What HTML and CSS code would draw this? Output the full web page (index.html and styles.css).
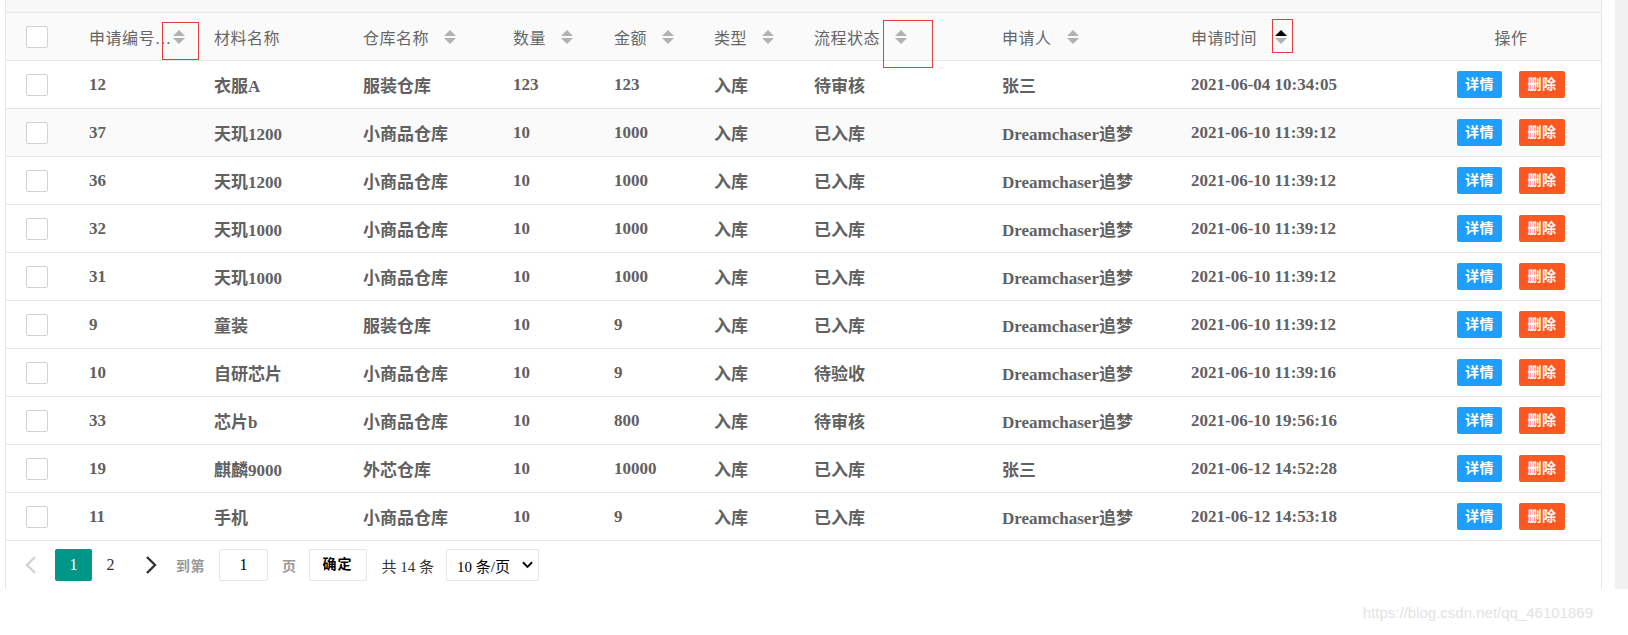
FILE: index.html
```html
<!DOCTYPE html>
<html lang="zh-CN">
<head>
<meta charset="utf-8">
<title>入库申请列表</title>
<link rel="stylesheet" href="styles.css">
</head>
<body>
<div class="page">
  <div class="table-box">
    <div class="toolbar"></div>
    <table class="grid">
      <colgroup>
        <col style="width:68px"><col style="width:125px"><col style="width:149px"><col style="width:150px">
        <col style="width:101px"><col style="width:100px"><col style="width:100px"><col style="width:188px">
        <col style="width:189px"><col style="width:245px"><col style="width:180px">
      </colgroup>
      <thead>
        <tr>
          <th class="chk-cell"><span class="chk"></span></th>
          <th><span class="hd">申请编号…<svg class="sort tight" viewBox="0 0 12 14"><path class="up" d="M0 6 L6 0 L12 6Z"/><path class="down" d="M0 8 L6 14 L12 8Z"/></svg></span></th>
          <th><span class="hd">材料名称</span></th>
          <th><span class="hd">仓库名称<svg class="sort" viewBox="0 0 12 14"><path class="up" d="M0 6 L6 0 L12 6Z"/><path class="down" d="M0 8 L6 14 L12 8Z"/></svg></span></th>
          <th><span class="hd">数量<svg class="sort" viewBox="0 0 12 14"><path class="up" d="M0 6 L6 0 L12 6Z"/><path class="down" d="M0 8 L6 14 L12 8Z"/></svg></span></th>
          <th><span class="hd">金额<svg class="sort" viewBox="0 0 12 14"><path class="up" d="M0 6 L6 0 L12 6Z"/><path class="down" d="M0 8 L6 14 L12 8Z"/></svg></span></th>
          <th><span class="hd">类型<svg class="sort" viewBox="0 0 12 14"><path class="up" d="M0 6 L6 0 L12 6Z"/><path class="down" d="M0 8 L6 14 L12 8Z"/></svg></span></th>
          <th><span class="hd">流程状态<svg class="sort" viewBox="0 0 12 14"><path class="up" d="M0 6 L6 0 L12 6Z"/><path class="down" d="M0 8 L6 14 L12 8Z"/></svg></span></th>
          <th><span class="hd">申请人<svg class="sort" viewBox="0 0 12 14"><path class="up" d="M0 6 L6 0 L12 6Z"/><path class="down" d="M0 8 L6 14 L12 8Z"/></svg></span></th>
          <th><span class="hd">申请时间<svg class="sort wide" viewBox="0 0 12 14"><path class="up active" d="M0 6 L6 0 L12 6Z"/><path class="down" d="M0 8 L6 14 L12 8Z"/></svg></span></th>
          <th class="center"><span class="hd">操作</span></th>
        </tr>
      </thead>
      <tbody>
        <tr><td class="chk-cell"><span class="chk"></span></td><td>12</td><td>衣服A</td><td>服装仓库</td><td>123</td><td>123</td><td>入库</td><td>待审核</td><td>张三</td><td>2021-06-04 10:34:05</td><td class="center"><span class="btn blue">详情</span><span class="btn red">删除</span></td></tr>
        <tr class="hover"><td class="chk-cell"><span class="chk"></span></td><td>37</td><td>天玑1200</td><td>小商品仓库</td><td>10</td><td>1000</td><td>入库</td><td>已入库</td><td>Dreamchaser追梦</td><td>2021-06-10 11:39:12</td><td class="center"><span class="btn blue">详情</span><span class="btn red">删除</span></td></tr>
        <tr><td class="chk-cell"><span class="chk"></span></td><td>36</td><td>天玑1200</td><td>小商品仓库</td><td>10</td><td>1000</td><td>入库</td><td>已入库</td><td>Dreamchaser追梦</td><td>2021-06-10 11:39:12</td><td class="center"><span class="btn blue">详情</span><span class="btn red">删除</span></td></tr>
        <tr><td class="chk-cell"><span class="chk"></span></td><td>32</td><td>天玑1000</td><td>小商品仓库</td><td>10</td><td>1000</td><td>入库</td><td>已入库</td><td>Dreamchaser追梦</td><td>2021-06-10 11:39:12</td><td class="center"><span class="btn blue">详情</span><span class="btn red">删除</span></td></tr>
        <tr><td class="chk-cell"><span class="chk"></span></td><td>31</td><td>天玑1000</td><td>小商品仓库</td><td>10</td><td>1000</td><td>入库</td><td>已入库</td><td>Dreamchaser追梦</td><td>2021-06-10 11:39:12</td><td class="center"><span class="btn blue">详情</span><span class="btn red">删除</span></td></tr>
        <tr><td class="chk-cell"><span class="chk"></span></td><td>9</td><td>童装</td><td>服装仓库</td><td>10</td><td>9</td><td>入库</td><td>已入库</td><td>Dreamchaser追梦</td><td>2021-06-10 11:39:12</td><td class="center"><span class="btn blue">详情</span><span class="btn red">删除</span></td></tr>
        <tr><td class="chk-cell"><span class="chk"></span></td><td>10</td><td>自研芯片</td><td>小商品仓库</td><td>10</td><td>9</td><td>入库</td><td>待验收</td><td>Dreamchaser追梦</td><td>2021-06-10 11:39:16</td><td class="center"><span class="btn blue">详情</span><span class="btn red">删除</span></td></tr>
        <tr><td class="chk-cell"><span class="chk"></span></td><td>33</td><td>芯片b</td><td>小商品仓库</td><td>10</td><td>800</td><td>入库</td><td>待审核</td><td>Dreamchaser追梦</td><td>2021-06-10 19:56:16</td><td class="center"><span class="btn blue">详情</span><span class="btn red">删除</span></td></tr>
        <tr><td class="chk-cell"><span class="chk"></span></td><td>19</td><td>麒麟9000</td><td>外芯仓库</td><td>10</td><td>10000</td><td>入库</td><td>已入库</td><td>张三</td><td>2021-06-12 14:52:28</td><td class="center"><span class="btn blue">详情</span><span class="btn red">删除</span></td></tr>
        <tr><td class="chk-cell"><span class="chk"></span></td><td>11</td><td>手机</td><td>小商品仓库</td><td>10</td><td>9</td><td>入库</td><td>已入库</td><td>Dreamchaser追梦</td><td>2021-06-12 14:53:18</td><td class="center"><span class="btn blue">详情</span><span class="btn red">删除</span></td></tr>
      </tbody>
    </table>
    <div class="pager">
      <svg class="arrow prev" viewBox="0 0 12 18"><path d="M10 1 L2 9 L10 17"/></svg>
      <span class="page-num current">1</span>
      <span class="page-num">2</span>
      <svg class="arrow next" viewBox="0 0 12 18"><path d="M2 1 L10 9 L2 17"/></svg>
      <span class="pg-label goto">到第</span>
      <span class="pg-input">1</span>
      <span class="pg-label unit">页</span>
      <span class="pg-btn">确定</span>
      <span class="pg-count">共 14 条</span>
      <span class="pg-select">10 条/页<svg class="caret" viewBox="0 0 12 8"><path d="M1 1 L6 6 L11 1"/></svg></span>
    </div>
  </div>
  <div class="rail-gap"></div>
  <div class="rail"></div>
</div>
<div class="mark mark-1"></div>
<div class="mark mark-2"></div>
<div class="mark mark-3"></div>
<div class="watermark">https://blog.csdn.net/qq_46101869</div>
</body>
</html>
```

FILE: styles.css
```css
html, body {
  margin: 0;
  padding: 0;
  background: #fff;
}
body {
  width: 1628px;
  height: 635px;
  position: relative;
  overflow: hidden;
  font-family: "Liberation Serif", "Noto Sans CJK SC", serif;
  color: #666;
}
.page {
  display: flex;
  align-items: flex-start;
  padding-left: 5px;
}
.table-box {
  width: 1595px;
  border-left: 1px solid #e6e6e6;
  border-right: 1px solid #e6e6e6;
  background: #fff;
}
.toolbar {
  height: 12px;
  background: #f8f8f8;
}
.grid {
  width: 1595px;
  table-layout: fixed;
  border-collapse: separate;
  border-spacing: 0;
}
.grid th, .grid td {
  height: 48px;
  padding: 0 15px;
  box-sizing: border-box;
  border-bottom: 1px solid #e6e6e6;
  text-align: left;
  white-space: nowrap;
  vertical-align: middle;
}
.grid th {
  height: 49px;
  border-top: 1px solid #e6e6e6;
  background: #fafafa;
  font-weight: normal;
  font-size: 16px;
  letter-spacing: 0.5px;
  color: #666;
}
.grid td {
  font-size: 17px;
  font-weight: bold;
  color: #616161;
}
.grid tr.hover td {
  background: #fafafa;
}
.grid .chk-cell {
  padding: 0 0 0 20px;
}
.grid .center {
  text-align: center;
}
.chk {
  display: block;
  width: 22px;
  height: 22px;
  box-sizing: border-box;
  border: 1px solid #d2d2d2;
  border-radius: 2px;
  background: #fff;
}
.hd {
  display: inline-flex;
  align-items: center;
}
.sort {
  width: 12px;
  height: 14px;
  margin-left: 15px;
  flex: none;
}
.sort.tight {
  margin-left: 1px;
}
.sort.wide {
  margin-left: 18px;
}
.sort path {
  fill: #b2b2b2;
}
.sort path.active {
  fill: #000;
}
.btn {
  display: inline-block;
  height: 27px;
  line-height: 27px;
  padding: 0 8px;
  border-radius: 2px;
  color: #fff;
  font-size: 14px;
  font-weight: bold;
  letter-spacing: 0.5px;
  vertical-align: middle;
}
.btn.blue {
  background: #1e9fff;
  width: 45px;
  box-sizing: border-box;
}
.btn.red {
  background: #ff5722;
  width: 46px;
  box-sizing: border-box;
  margin-left: 17px;
}
.pager {
  display: flex;
  align-items: center;
  height: 48px;
  padding: 0 0 0 19px;
  box-sizing: border-box;
  font-size: 16px;
}
.arrow {
  width: 12px;
  height: 18px;
  fill: none;
  stroke-width: 2.4;
}
.arrow.prev {
  stroke: #d2d2d2;
}
.arrow.next {
  stroke: #333;
  margin-left: 16px;
}
.page-num {
  width: 37px;
  height: 32px;
  line-height: 32px;
  text-align: center;
  color: #333;
  border-radius: 2px;
}
.page-num.current {
  margin-left: 18px;
  background: #009688;
  color: #fff;
}
.pg-label {
  font-size: 14px;
  font-weight: bold;
  color: #999;
  letter-spacing: 0.5px;
}
.pg-label.goto {
  margin-left: 19px;
}
.pg-label.unit {
  margin-left: 14px;
}
.pg-input {
  margin-left: 14px;
  width: 49px;
  height: 32px;
  line-height: 30px;
  box-sizing: border-box;
  border: 1px solid #e6e6e6;
  border-radius: 2px;
  text-align: center;
  color: #000;
}
.pg-btn {
  margin-left: 12px;
  width: 58px;
  height: 32px;
  line-height: 30px;
  box-sizing: border-box;
  border: 1px solid #e6e6e6;
  border-radius: 2px;
  text-align: center;
  font-size: 14px;
  font-weight: bold;
  color: #000;
  letter-spacing: 1px;
}
.pg-count {
  margin-left: 15px;
  color: #333;
  font-size: 15px;
}
.pg-select {
  margin-left: 12px;
  width: 93px;
  height: 32px;
  box-sizing: border-box;
  border: 1px solid #e6e6e6;
  border-radius: 2px;
  display: flex;
  align-items: center;
  padding-left: 10px;
  color: #000;
  font-size: 15px;
}
.caret {
  width: 11px;
  height: 8px;
  margin-left: auto;
  margin-right: 5px;
  fill: none;
  stroke: #000;
  stroke-width: 2;
}
.rail-gap {
  width: 13px;
}
.rail {
  width: 13px;
  height: 589px;
  background: #f1f1f1;
}
.mark {
  position: absolute;
  border: 1px solid #e53e3e;
  box-sizing: border-box;
}
.mark-1 {
  left: 162px;
  top: 22px;
  width: 37px;
  height: 38px;
}
.mark-2 {
  left: 883px;
  top: 20px;
  width: 50px;
  height: 48px;
}
.mark-3 {
  left: 1272px;
  top: 19px;
  width: 21px;
  height: 34px;
}
.watermark {
  position: absolute;
  right: 35px;
  top: 604px;
  font-family: "Liberation Sans", sans-serif;
  font-size: 15px;
  color: #e3e3e3;
}
```
